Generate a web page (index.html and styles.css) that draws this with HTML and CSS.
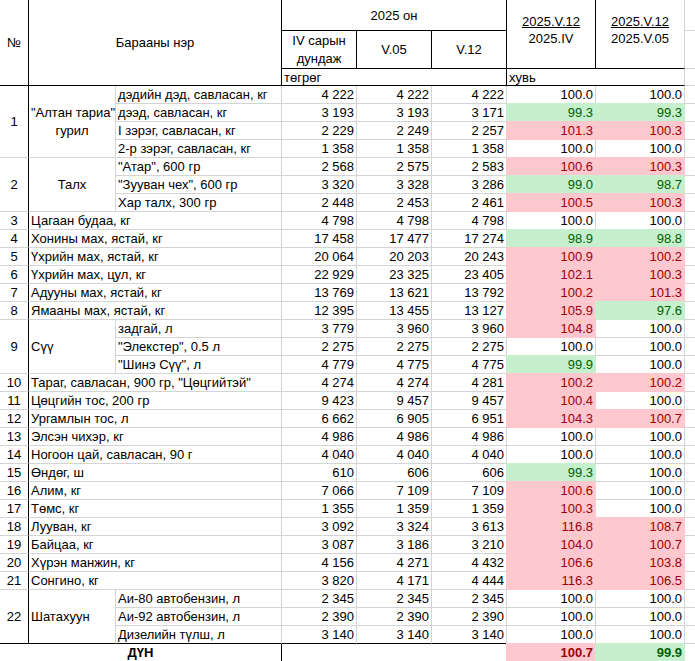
FILE: index.html
```html
<!DOCTYPE html>
<html lang="mn">
<head>
<meta charset="utf-8">
<title>Үнийн харьцуулалт</title>
<link rel="stylesheet" href="styles.css">
</head>
<body>
<table class="sheet">
<colgroup><col class="c0"><col class="c1"><col class="c2"><col class="c3"><col class="c4"><col class="c5"><col class="c6"><col class="c7"><col class="c8"></colgroup>
<thead>
<tr class="h1">
<th rowspan="3" class="hn">№</th>
<th rowspan="3" colspan="2" class="hname">Барааны нэр</th>
<th colspan="3" class="hyear">2025 он</th>
<th rowspan="2" class="hr hr1"><span class="u">2025.V.12</span><br>2025.IV</th>
<th rowspan="2" class="hr hr2"><span class="u">2025.V.12</span><br>2025.V.05</th>
<td class="x"></td>
</tr>
<tr class="h2">
<th class="hsub wrap">IV сарын дундаж</th>
<th class="hsub">V.05</th>
<th class="hsub">V.12</th>
<td class="x"></td>
</tr>
<tr class="h3">
<td colspan="3" class="unit u1">төгрөг</td>
<td colspan="2" class="unit u2">хувь</td>
<td class="x"></td>
</tr>
</thead>
<tbody>
<tr><td class="n" rowspan="4">1</td><td class="grp c" rowspan="4">"Алтан тариа"<br>гурил</td><td class="t">дэдийн дэд, савласан, кг</td><td class="v">4 222</td><td class="v">4 222</td><td class="v">4 222</td><td class="r">100.0</td><td class="r">100.0</td><td class="x"></td></tr>
<tr><td class="t">дээд, савласан, кг</td><td class="v">3 193</td><td class="v">3 193</td><td class="v">3 171</td><td class="r gr">99.3</td><td class="r gr">99.3</td><td class="x"></td></tr>
<tr><td class="t">I зэрэг, савласан, кг</td><td class="v">2 229</td><td class="v">2 249</td><td class="v">2 257</td><td class="r p">101.3</td><td class="r p">100.3</td><td class="x"></td></tr>
<tr><td class="t">2-р зэрэг, савласан, кг</td><td class="v">1 358</td><td class="v">1 358</td><td class="v">1 358</td><td class="r">100.0</td><td class="r">100.0</td><td class="x"></td></tr>

<tr><td class="n" rowspan="3">2</td><td class="grp c" rowspan="3">Талх</td><td class="t">"Атар", 600 гр</td><td class="v">2 568</td><td class="v">2 575</td><td class="v">2 583</td><td class="r p">100.6</td><td class="r p">100.3</td><td class="x"></td></tr>
<tr><td class="t">"Зууван чех", 600 гр</td><td class="v">3 320</td><td class="v">3 328</td><td class="v">3 286</td><td class="r gr">99.0</td><td class="r gr">98.7</td><td class="x"></td></tr>
<tr><td class="t">Хар талх, 300 гр</td><td class="v">2 448</td><td class="v">2 453</td><td class="v">2 461</td><td class="r p">100.5</td><td class="r p">100.3</td><td class="x"></td></tr>

<tr><td class="n">3</td><td class="t" colspan="2">Цагаан будаа, кг</td><td class="v">4 798</td><td class="v">4 798</td><td class="v">4 798</td><td class="r">100.0</td><td class="r">100.0</td><td class="x"></td></tr>
<tr><td class="n">4</td><td class="t" colspan="2">Хонины мах, ястай, кг</td><td class="v">17 458</td><td class="v">17 477</td><td class="v">17 274</td><td class="r gr">98.9</td><td class="r gr">98.8</td><td class="x"></td></tr>
<tr><td class="n">5</td><td class="t" colspan="2">Үхрийн мах, ястай, кг</td><td class="v">20 064</td><td class="v">20 203</td><td class="v">20 243</td><td class="r p">100.9</td><td class="r p">100.2</td><td class="x"></td></tr>
<tr><td class="n">6</td><td class="t" colspan="2">Үхрийн мах, цул, кг</td><td class="v">22 929</td><td class="v">23 325</td><td class="v">23 405</td><td class="r p">102.1</td><td class="r p">100.3</td><td class="x"></td></tr>
<tr><td class="n">7</td><td class="t" colspan="2">Адууны мах, ястай, кг</td><td class="v">13 769</td><td class="v">13 621</td><td class="v">13 792</td><td class="r p">100.2</td><td class="r p">101.3</td><td class="x"></td></tr>
<tr><td class="n">8</td><td class="t" colspan="2">Ямааны мах, ястай, кг</td><td class="v">12 395</td><td class="v">13 455</td><td class="v">13 127</td><td class="r p">105.9</td><td class="r gr">97.6</td><td class="x"></td></tr>

<tr><td class="n" rowspan="3">9</td><td class="grp" rowspan="3">Сүү</td><td class="t">задгай, л</td><td class="v">3 779</td><td class="v">3 960</td><td class="v">3 960</td><td class="r p">104.8</td><td class="r">100.0</td><td class="x"></td></tr>
<tr><td class="t">"Элекстер", 0.5 л</td><td class="v">2 275</td><td class="v">2 275</td><td class="v">2 275</td><td class="r">100.0</td><td class="r">100.0</td><td class="x"></td></tr>
<tr><td class="t">"Шинэ Сүү", л</td><td class="v">4 779</td><td class="v">4 775</td><td class="v">4 775</td><td class="r gr">99.9</td><td class="r">100.0</td><td class="x"></td></tr>

<tr><td class="n">10</td><td class="t" colspan="2">Тараг, савласан, 900 гр, "Цөцгийтэй"</td><td class="v">4 274</td><td class="v">4 274</td><td class="v">4 281</td><td class="r p">100.2</td><td class="r p">100.2</td><td class="x"></td></tr>
<tr><td class="n">11</td><td class="t" colspan="2">Цөцгийн тос, 200 гр</td><td class="v">9 423</td><td class="v">9 457</td><td class="v">9 457</td><td class="r p">100.4</td><td class="r">100.0</td><td class="x"></td></tr>
<tr><td class="n">12</td><td class="t" colspan="2">Ургамлын тос, л</td><td class="v">6 662</td><td class="v">6 905</td><td class="v">6 951</td><td class="r p">104.3</td><td class="r p">100.7</td><td class="x"></td></tr>
<tr><td class="n">13</td><td class="t" colspan="2">Элсэн чихэр, кг</td><td class="v">4 986</td><td class="v">4 986</td><td class="v">4 986</td><td class="r">100.0</td><td class="r">100.0</td><td class="x"></td></tr>
<tr><td class="n">14</td><td class="t" colspan="2">Ногоон цай, савласан, 90 г</td><td class="v">4 040</td><td class="v">4 040</td><td class="v">4 040</td><td class="r">100.0</td><td class="r">100.0</td><td class="x"></td></tr>
<tr><td class="n">15</td><td class="t" colspan="2">Өндөг, ш</td><td class="v">610</td><td class="v">606</td><td class="v">606</td><td class="r gr">99.3</td><td class="r">100.0</td><td class="x"></td></tr>
<tr><td class="n">16</td><td class="t" colspan="2">Алим, кг</td><td class="v">7 066</td><td class="v">7 109</td><td class="v">7 109</td><td class="r p">100.6</td><td class="r">100.0</td><td class="x"></td></tr>
<tr><td class="n">17</td><td class="t" colspan="2">Төмс, кг</td><td class="v">1 355</td><td class="v">1 359</td><td class="v">1 359</td><td class="r p">100.3</td><td class="r">100.0</td><td class="x"></td></tr>
<tr><td class="n">18</td><td class="t" colspan="2">Лууван, кг</td><td class="v">3 092</td><td class="v">3 324</td><td class="v">3 613</td><td class="r p">116.8</td><td class="r p">108.7</td><td class="x"></td></tr>
<tr><td class="n">19</td><td class="t" colspan="2">Байцаа, кг</td><td class="v">3 087</td><td class="v">3 186</td><td class="v">3 210</td><td class="r p">104.0</td><td class="r p">100.7</td><td class="x"></td></tr>
<tr><td class="n">20</td><td class="t" colspan="2">Хүрэн манжин, кг</td><td class="v">4 156</td><td class="v">4 271</td><td class="v">4 432</td><td class="r p">106.6</td><td class="r p">103.8</td><td class="x"></td></tr>
<tr><td class="n">21</td><td class="t" colspan="2">Сонгино, кг</td><td class="v">3 820</td><td class="v">4 171</td><td class="v">4 444</td><td class="r p">116.3</td><td class="r p">106.5</td><td class="x"></td></tr>

<tr><td class="n last" rowspan="3">22</td><td class="grp last" rowspan="3">Шатахуун</td><td class="t">Аи-80 автобензин, л</td><td class="v">2 345</td><td class="v">2 345</td><td class="v">2 345</td><td class="r">100.0</td><td class="r">100.0</td><td class="x"></td></tr>
<tr><td class="t">Аи-92 автобензин, л</td><td class="v">2 390</td><td class="v">2 390</td><td class="v">2 390</td><td class="r">100.0</td><td class="r">100.0</td><td class="x"></td></tr>
<tr><td class="t last">Дизелийн түлш, л</td><td class="v last">3 140</td><td class="v last">3 140</td><td class="v last">3 140</td><td class="r">100.0</td><td class="r">100.0</td><td class="x"></td></tr>

<tr class="tot"><td colspan="3" class="tl">ДҮН</td><td colspan="3" class="te"></td><td class="r p b">100.7</td><td class="r gr b">99.9</td><td class="x"></td></tr>
</tbody>
</table>
</body>
</html>
```

FILE: styles.css
```css
* { box-sizing: border-box; }
html, body { margin: 0; padding: 0; background: #fff; overflow: hidden; }
body {
  font-family: "Liberation Sans", Arial, sans-serif;
  font-size: 13px;
  color: #000;
}
.sheet {
  border-collapse: separate;
  border-spacing: 0;
  table-layout: fixed;
  width: 695px;
}
.c0 { width: 29px; }
.c1 { width: 87px; }
.c2 { width: 166px; }
.c3, .c4, .c5 { width: 75px; }
.c6, .c7 { width: 89px; }
.c8 { width: 10px; }

:where(.sheet) th, :where(.sheet) td {
  padding: 0 2px;
  border: 0;
  border-right: 1px solid #d4d4d4;
  border-bottom: 1px solid #d4d4d4;
  font-weight: normal;
  white-space: nowrap;
  overflow: hidden;
  line-height: 15px;
  vertical-align: middle;
}
.h1 { height: 31px; }
.h2 { height: 38px; }
.h3 { height: 17px; }
tbody tr { height: 18px; }

.hn, .hname, .hyear, .hsub, .hr1, .u1 { border-right-color: #000; border-bottom-color: #000; text-align: center; }
.hr2, .u2 { border-bottom-color: #000; text-align: center; }
.hsub.wrap { white-space: normal; line-height: 18px; padding-top: 1px; }
.hr { vertical-align: top; padding-top: 13px; line-height: 17px; }
.u { text-decoration: underline; }
.unit { text-align: left; line-height: 15px; }
.x { border-right: 0; padding: 0; }

.n { text-align: center; border-right-color: #000; }
.grp { text-align: left; line-height: 18px; }
.grp.c { text-align: center; }
.t { text-align: left; }
.v, .r { text-align: right; }
.last { border-bottom-color: #000; }

.p {
  background: #ffc7ce;
  color: #9c0006;
  border-right-color: #ffc7ce;
  border-bottom-color: #ffc7ce;
  box-shadow: -1px -1px 0 0 #ffc7ce;
}
.gr {
  background: #c6efce;
  color: #006100;
  border-right-color: #c6efce;
  border-bottom-color: #c6efce;
  box-shadow: -1px -1px 0 0 #c6efce;
}
.b { font-weight: bold; }
.tl { text-align: center; font-weight: bold; border-right-color: #000; }
.te { border-right-color: #000; }
```
